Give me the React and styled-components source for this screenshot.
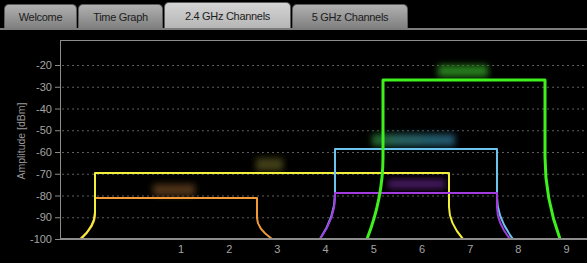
import React from 'react';
import styled, { createGlobalStyle } from 'styled-components';

const GlobalStyle = createGlobalStyle`
  html, body {
    margin: 0;
    padding: 0;
    background: #000;
  }
  body {
    font-family: 'Liberation Sans', Arial, sans-serif;
  }
`;

const Window = styled.div`
  width: 587px;
  height: 263px;
  background: #000;
  display: flex;
  flex-direction: column;
  overflow: hidden;
`;

const TabBar = styled.div`
  display: flex;
  align-items: flex-end;
  gap: 1px;
  padding-left: 4px;
  border-bottom: 2px solid #7c7c7c;
  box-sizing: border-box;
  flex: none;
  height: 30px;
`;

const Tab = styled.div`
  width: ${p => p.width}px;
  height: ${p => (p.active ? 26 : 24)}px;
  box-sizing: border-box;
  border: 1px solid #5c5c5c;
  border-bottom: none;
  border-radius: 5px 5px 0 0;
  background: ${p => p.active
    ? 'linear-gradient(180deg, #d4d4d4 0%, #c2c2c2 60%, #b6b6b6 100%)'
    : 'linear-gradient(180deg, #b0b0b0 0%, #969696 55%, #808080 100%)'};
  color: #1c1c1c;
  font-size: 11px;
  display: flex;
  align-items: center;
  justify-content: center;
  padding-top: 1px;
  letter-spacing: -0.3px;
`;

const ChartArea = styled.div`
  flex: 1;
  display: flex;
`;

const Plot = styled.svg`
  display: block;
  width: 587px;
  height: 233px;
  font-family: 'Liberation Sans', Arial, sans-serif;
`;

const tabs = [
  { label: 'Welcome', width: 73 },
  { label: 'Time Graph', width: 85 },
  { label: '2.4 GHz Channels', width: 127, active: true },
  { label: '5 GHz Channels', width: 116 },
];

const yOf = d => 239 - (d + 100) * 2.175;
const xOfChannel = n => 181 + (n - 1) * 48.2;

const channels = [
  { color: '#f29a3a', width: 2, xb1: 80, xv1: 95, xv2: 257, xb2: 272, top: 198, cy1: 215, cy2: 218 },
  { color: '#f2ee3c', width: 2, xb1: 81, xv1: 95, xv2: 449, xb2: 463, top: 173, cy1: 212, cy2: 207 },
  { color: '#6cc4ee', width: 2, xb1: 320, xv1: 335, xv2: 497, xb2: 513, top: 149, cy1: 194, cy2: 197 },
  { color: '#a23ee0', width: 2, xb1: 320, xv1: 335, xv2: 497, xb2: 510, top: 193, cy1: 197, cy2: 207 },
  { color: '#3ef01c', width: 3, xb1: 367, xv1: 383, xv2: 545, xb2: 560, top: 80, cy1: 157, cy2: 157 },
];

const glows = [
  { x: 438, y: 65, w: 50, h: 12, fill: '#267a1a' },
  { x: 372, y: 134, w: 83, h: 12, fill: 'url(#greenCyan)' },
  { x: 388, y: 179, w: 57, h: 10, fill: '#42185a' },
  { x: 256, y: 158, w: 27, h: 13, fill: '#403c16' },
  { x: 153, y: 184, w: 42, h: 12, fill: '#4e3212' },
];

const channelPath = c => {
  const b = 239;
  const h1 = b - c.cy1;
  const h2 = b - c.cy2;
  return [
    `M ${c.xb1} ${b}`,
    `Q ${c.xv1} ${c.cy1 + h1 * 0.5} ${c.xv1} ${c.cy1}`,
    `L ${c.xv1} ${c.top}`,
    `L ${c.xv2} ${c.top}`,
    `L ${c.xv2} ${c.cy2}`,
    `Q ${c.xv2} ${c.cy2 + h2 * 0.5} ${c.xb2} ${b}`,
  ].join(' ');
};

const levels = [-20, -30, -40, -50, -60, -70, -80, -90, -100];

export default function App() {
  return (
    <Window>
      <GlobalStyle />
      <TabBar>
        {tabs.map(t => (
          <Tab key={t.label} width={t.width} active={t.active}>{t.label}</Tab>
        ))}
      </TabBar>
      <ChartArea>
        <Plot viewBox="0 30 587 233">
          <defs>
            <filter id="soft" x="-40%" y="-80%" width="180%" height="260%">
              <feGaussianBlur stdDeviation="3.2" />
            </filter>
            <linearGradient id="greenCyan" x1="0" x2="1" y1="0" y2="0">
              <stop offset="0" stopColor="#226424" />
              <stop offset="0.35" stopColor="#266262" />
              <stop offset="1" stopColor="#22546e" />
            </linearGradient>
          </defs>

          <text
            x="0"
            y="0"
            transform="translate(25 141) rotate(-90)"
            textAnchor="middle"
            fontSize="10.5"
            fill="#9a9a9a"
          >
            Amplitude [dBm]
          </text>

          {levels.map(d => (
            <g key={d}>
              <text x="52" y={yOf(d) + 4} textAnchor="end" fontSize="11" fill="#a4a4a4">{d}</text>
              <line x1="55" x2="60" y1={yOf(d) + 0.5} y2={yOf(d) + 0.5} stroke="#8a8a8a" />
              {d > -100 && (
                <line
                  x1="62"
                  x2="587"
                  y1={yOf(d) + 0.5}
                  y2={yOf(d) + 0.5}
                  stroke="#5e5e5e"
                  strokeDasharray="2 3"
                />
              )}
            </g>
          ))}

          <line x1="60" x2="587" y1="40.5" y2="40.5" stroke="#8c8c8c" />
          <line x1="60.5" x2="60.5" y1="40" y2="239" stroke="#8c8c8c" />

          {glows.map((g, i) => (
            <rect key={i} x={g.x} y={g.y} width={g.w} height={g.h} fill={g.fill} filter="url(#soft)" />
          ))}

          {channels.map((c, i) => (
            <path
              key={i}
              d={channelPath(c)}
              fill="none"
              stroke={c.color}
              strokeWidth={c.width}
              strokeLinejoin="round"
            />
          ))}

          <line x1="60" x2="587" y1="239" y2="239" stroke="#8c8c8c" strokeWidth="2" />

          {[1, 2, 3, 4, 5, 6, 7, 8, 9].map(n => (
            <text key={n} x={xOfChannel(n)} y="253" textAnchor="middle" fontSize="11" fill="#a4a4a4">{n}</text>
          ))}
        </Plot>
      </ChartArea>
    </Window>
  );
}
